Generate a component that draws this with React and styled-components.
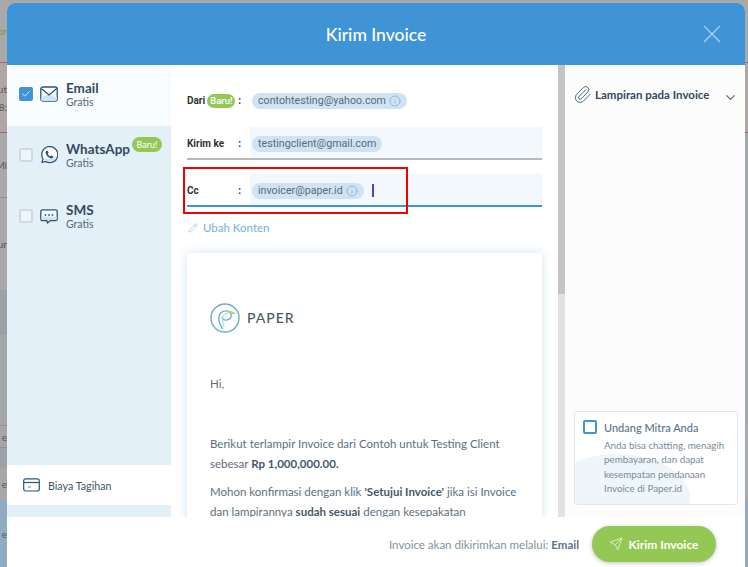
import React from "react";
import styled, { createGlobalStyle } from "styled-components";
import { Check, Paperclip, ChevronDown, X, Info, Pencil, Send } from "lucide-react";

const GlobalStyle = createGlobalStyle`
    html, body {
        margin: 0;
        padding: 0;
        background: #a8a8a8;
        font-family: "Lato", sans-serif;
    }
    * {
        box-sizing: border-box;
    }
`;

const channels = [
    { name: "Email", checked: true, active: true, icon: <MailIcon /> },
    { name: "WhatsApp", isNew: true, icon: <WhatsappIcon /> },
    { name: "SMS", icon: <SmsIcon /> },
];

// what shows of the page behind the modal, top to bottom
const backLeft = [
    { h: 62, tint: "#a9a9a9", text: "or", color: "#7f9a45" },
    { h: 71, tint: "#b0a6a6", text: "ut 8:", line: "#a8606e", lineTop: "#a8606e" },
    { h: 65, tint: "#a9a9a9", text: "Mi", line: "#8f8f8f" },
    { h: 92, tint: "#a8a8a8", text: "ur" },
    { h: 45, tint: "#9aa2a6" },
    { h: 90, tint: "#a5a6a7", text: "", },
    { h: 23, tint: "#a6a6a6", text: "e", line: "#8f8f8f", lineTop: "#8f8f8f" },
    { h: 20, tint: "#9ba3a8" },
    { h: 32, tint: "#a8a8a8", text: "e" },
    { h: 67, tint: "#8facc2", text: "e" },
];

const backRight = [
    { h: 62, tint: "#a9a9a9" },
    { h: 71, tint: "#b0a6a6", line: "#a8606e", lineTop: "#a8606e" },
    { h: 290, tint: "#a3a8ab" },
    { h: 77, tint: "#a8abad" },
    { h: 67, tint: "#8facc2" },
];

function MailIcon() {
    return (
        <svg width="18" height="16" viewBox="0 0 18 16" fill="none">
            <rect x="0.8" y="1" width="16.4" height="14" rx="2" fill="#fff" stroke="#2b5578" strokeWidth="1.3" />
            <path d="M1 11.5 L9 8 L17 11.5 V13 a2 2 0 0 1-2 2 H3 a2 2 0 0 1-2-2 Z" fill="#cfe3f2" />
            <path d="M1.2 2.5 L9 9 L16.8 2.5" stroke="#2b5578" strokeWidth="1.3" />
        </svg>
    );
}

function WhatsappIcon() {
    return (
        <svg width="18" height="18" viewBox="0 0 18 18" fill="none">
            <path d="M2 16.5 L3 12.8 A8 8 0 1 1 5.6 15.4 Z" fill="#fff" stroke="#2b5578" strokeWidth="1.3" strokeLinejoin="round" />
            <path d="M3 12.5 A8 8 0 0 0 16.8 10.5 C12 13 7 13 3 12.5 Z" fill="#cfe3f2" />
            <path d="M6.4 5 L7.8 4.7 L8.6 6.8 L7.7 7.7 C8.2 8.9 9.1 9.8 10.3 10.3 L11.2 9.4 L13.3 10.2 L13 11.6 C12.6 12.4 11.6 12.6 10.6 12.2 C8.2 11.3 6.7 9.8 5.8 7.4 C5.4 6.4 5.6 5.4 6.4 5 Z" fill="#2b5578" />
        </svg>
    );
}

function SmsIcon() {
    return (
        <svg width="18" height="15" viewBox="0 0 18 15" fill="none">
            <path d="M2.5 0.8 H15.5 a1.7 1.7 0 0 1 1.7 1.7 V10 a1.7 1.7 0 0 1-1.7 1.7 H10 L7.5 14 L7 11.7 H2.5 A1.7 1.7 0 0 1 0.8 10 V2.5 A1.7 1.7 0 0 1 2.5 0.8 Z" fill="#fff" stroke="#2b5578" strokeWidth="1.3" strokeLinejoin="round" />
            <path d="M1.4 7.5 H16.6 V10 a1 1 0 0 1-1 1 H2.4 a1 1 0 0 1-1-1 Z" fill="#cfe3f2" />
            <circle cx="5.5" cy="6" r="0.9" fill="#2b5578" />
            <circle cx="9" cy="6" r="0.9" fill="#2b5578" />
            <circle cx="12.5" cy="6" r="0.9" fill="#2b5578" />
        </svg>
    );
}

function BillIcon() {
    return (
        <svg width="17" height="14" viewBox="0 0 17 14" fill="none">
            <rect x="0.7" y="0.8" width="15.6" height="12.2" rx="2" stroke="#2b5578" strokeWidth="1.2" />
            <path d="M1 4.5 H16" stroke="#2b5578" strokeWidth="1.2" />
            <path d="M5 9 H8" stroke="#7f9bb2" strokeWidth="1.2" />
        </svg>
    );
}

function PaperLogo() {
    return (
        <svg width="30" height="30" viewBox="0 0 30 30" fill="none">
            <circle cx="15" cy="15" r="14" fill="#fdfefe" stroke="#6fb0b8" strokeWidth="1.4" />
            <path d="M12.5 25.5 C9.5 21 8 16 9.3 12.3 C10.6 8.6 15 7 18.3 8.3 C21.8 9.7 22.2 14.2 19.2 16.2 C16.8 17.8 13.4 17.4 12.2 15" stroke="#6fb4bd" strokeWidth="1.4" strokeLinecap="round" />
            <path d="M14 23.5 C12.4 19 12 14.5 14 11.8 C15 10.6 16.4 10.2 17.6 10.5" stroke="#a3d2d8" strokeWidth="1" strokeLinecap="round" />
            <path d="M16 8 C19 7.2 23 8.2 26 10.8 C23 11.6 19 10.6 16 8 Z" fill="#a5d27a" />
        </svg>
    );
}

const BackColumn = ({ bands, $width }) => (
    <BackStrip $width={$width}>
        {bands.map((b, i) => (
            <BackBand key={i} $h={b.h} $tint={b.tint} $line={b.line} $lineTop={b.lineTop} $color={b.color}>
                {b.text && b.text.split(" ").map((t) => <span key={t}>{t}</span>)}
            </BackBand>
        ))}
    </BackStrip>
);

const App = () => {
    return (
        <Page>
            <GlobalStyle />
            <BackColumn bands={backLeft} $width={7} />
            <Modal>
                <Header>
                    <Title>Kirim Invoice</Title>
                    <CloseButton><X size={30} strokeWidth={1} /></CloseButton>
                </Header>
                <Body>
                    <Sidebar>
                        <Channels>
                            {channels.map((c) => (
                                <Channel key={c.name} $active={c.active}>
                                    <CheckBox $checked={c.checked}>
                                        {c.checked && <Check size={12} strokeWidth={2} color="#fff" />}
                                    </CheckBox>
                                    <ChannelIcon>{c.icon}</ChannelIcon>
                                    <ChannelText>
                                        <ChannelName>
                                            {c.name}
                                            {c.isNew && <SideBadge>Baru!</SideBadge>}
                                        </ChannelName>
                                        <Free>Gratis</Free>
                                    </ChannelText>
                                </Channel>
                            ))}
                        </Channels>
                        <BillRow>
                            <BillIcon />
                            <span>Biaya Tagihan</span>
                        </BillRow>
                    </Sidebar>
                    <Main>
                        <Field>
                            <Label>
                                <LabelName>Dari <FieldBadge>Baru!</FieldBadge></LabelName>
                                <span>:</span>
                            </Label>
                            <Input $plain>
                                <Chip>contohtesting@yahoo.com <Info size={12} strokeWidth={1.2} color="#5fa3dc" /></Chip>
                            </Input>
                        </Field>
                        <Field $border="#b9b9b9">
                            <Label>
                                <LabelName>Kirim ke</LabelName>
                                <span>:</span>
                            </Label>
                            <Input>
                                <Chip>testingclient@gmail.com</Chip>
                            </Input>
                        </Field>
                        <Field $border="#3f94d8">
                            <Label>
                                <LabelName>Cc</LabelName>
                                <span>:</span>
                            </Label>
                            <Input>
                                <Chip>invoicer@paper.id <Info size={12} strokeWidth={1.2} color="#5fa3dc" /></Chip>
                                <Caret />
                            </Input>
                        </Field>
                        <EditLink><Pencil size={10} strokeWidth={1.2} /> Ubah Konten</EditLink>
                        <Letter>
                            <Logo>
                                <PaperLogo />
                                <LogoName>PAPER</LogoName>
                            </Logo>
                            <Greeting>Hi,</Greeting>
                            <Para>
                                Berikut terlampir Invoice dari Contoh untuk Testing Client sebesar <b>Rp 1,000,000.00.</b>
                            </Para>
                            <Para>
                                Mohon konfirmasi dengan klik <b>'Setujui Invoice'</b> jika isi Invoice dan lampirannya <b>sudah sesuai</b> dengan kesepakatan
                            </Para>
                        </Letter>
                    </Main>
                    <Scrollbar />
                    <Aside>
                        <Attach>
                            <Paperclip size={19} strokeWidth={1.1} color="#2b5578" />
                            <AttachTitle>Lampiran pada Invoice</AttachTitle>
                            <ChevronDown size={15} strokeWidth={2} color="#5c6b78" />
                        </Attach>
                        <Invite>
                            <InviteHead>
                                <InviteBox />
                                <InviteTitle>Undang Mitra Anda</InviteTitle>
                            </InviteHead>
                            <InviteText>
                                Anda bisa chatting, menagih pembayaran, dan dapat kesempatan pendanaan Invoice di Paper.id
                            </InviteText>
                        </Invite>
                    </Aside>
                </Body>
                <Footer>
                    <FooterNote>Invoice akan dikirimkan melalui: <b>Email</b></FooterNote>
                    <SendButton><Send size={14} strokeWidth={1.1} /> Kirim Invoice</SendButton>
                </Footer>
                <Annotation />
            </Modal>
            <BackColumn bands={backRight} $width={3} />
        </Page>
    );
};

const Page = styled.div`
    display: flex;
    width: 748px;
    height: 567px;
    overflow: hidden;
    background: #a8a8a8;
`;

const BackStrip = styled.div`
    flex: none;
    width: ${(p) => p.$width}px;
    display: flex;
    flex-direction: column;
    overflow: hidden;
    font-size: 10px;
    color: #555;
`;

const BackBand = styled.div`
    flex: none;
    height: ${(p) => p.$h}px;
    display: flex;
    flex-direction: column;
    align-items: flex-end;
    justify-content: center;
    gap: 6px;
    color: ${(p) => p.$color || "#555"};
    background: ${(p) => p.$tint};
    border-top: ${(p) => (p.$lineTop ? `1px solid ${p.$lineTop}` : "none")};
    border-bottom: ${(p) => (p.$line ? `1px solid ${p.$line}` : "none")};
    span {
        white-space: nowrap;
        line-height: 12px;
    }
`;

const Modal = styled.div`
    position: relative;
    flex: none;
    width: 738px;
    height: 564px;
    margin-top: 3px;
    display: flex;
    flex-direction: column;
    border-radius: 8px 8px 0 0;
    overflow: hidden;
    background: #fff;
`;

const Annotation = styled.div`
    position: absolute;
    left: 176px;
    top: 164px;
    width: 225px;
    height: 47px;
    border: 2px solid #f00000;
    pointer-events: none;
`;

const Header = styled.header`
    position: relative;
    flex: none;
    height: 62px;
    display: flex;
    align-items: center;
    justify-content: center;
    background: #3f94d6;
`;

const Title = styled.h1`
    margin: 0;
    font-size: 17.5px;
    font-weight: 500;
    color: #fff;
`;

const CloseButton = styled.span`
    position: absolute;
    right: 18px;
    top: 16px;
    display: flex;
    color: #a9d0ef;
`;

const Body = styled.div`
    flex: none;
    height: 452px;
    display: flex;
    overflow: hidden;
`;

const Sidebar = styled.nav`
    flex: none;
    width: 164px;
    display: flex;
    flex-direction: column;
    background: #e3f0f8;
`;

const Channels = styled.div`
    flex: none;
    height: 400px;
`;

const Channel = styled.div`
    height: 61px;
    display: flex;
    align-items: center;
    padding: 0 0 3px 12px;
    background: ${(p) => (p.$active ? "#f8fcff" : "transparent")};
`;

const CheckBox = styled.span`
    flex: none;
    width: 14px;
    height: 14px;
    display: flex;
    align-items: center;
    justify-content: center;
    border-radius: 2px;
    border: 2px solid ${(p) => (p.$checked ? "#3f94d6" : "#cfd9e0")};
    background: ${(p) => (p.$checked ? "#3f94d6" : "#eef5fa")};
`;

const ChannelIcon = styled.span`
    flex: none;
    width: 18px;
    margin: 0 8px 0 7px;
    display: flex;
    justify-content: center;
`;

const ChannelText = styled.div`
    display: flex;
    flex-direction: column;
`;

const ChannelName = styled.div`
    display: flex;
    font-size: 13.5px;
    line-height: 16px;
    font-weight: 700;
    color: #34495e;
`;

const SideBadge = styled.span`
    width: 30px;
    height: 15px;
    margin: -4px 0 0 2px;
    border-radius: 8px;
    text-align: center;
    font-size: 9px;
    line-height: 15px;
    font-weight: 400;
    color: #fff;
    background: #94c854;
`;

const Free = styled.div`
    font-size: 10.5px;
    line-height: 13px;
    color: #56697a;
`;

const BillRow = styled.div`
    flex: none;
    height: 40px;
    display: flex;
    align-items: center;
    gap: 8px;
    padding-left: 16px;
    font-size: 10.7px;
    color: #3d5568;
    background: #fff;
`;

const Main = styled.main`
    flex: none;
    width: 387px;
    padding: 18px 16px 0;
    overflow: hidden;
    background: #fff;
`;

const Field = styled.div`
    display: flex;
    height: 33px;
    margin-bottom: ${(p) => (p.$border ? 14 : 11)}px;
    border-bottom: ${(p) => (p.$border ? `2px solid ${p.$border}` : "none")};
`;

const Label = styled.div`
    flex: none;
    width: 63px;
    padding: 2px 9px 0 0;
    display: flex;
    align-items: center;
    justify-content: space-between;
    font-family: "Roboto", sans-serif;
    font-size: 10px;
    font-weight: 700;
    color: #333;
`;

const LabelName = styled.span`
    display: flex;
    align-items: center;
    gap: 2px;
`;

const FieldBadge = styled.span`
    padding: 0 3px;
    height: 14px;
    border-radius: 7px;
    font-size: 9.5px;
    line-height: 14px;
    font-weight: 500;
    color: #fff;
    background: #94c854;
`;

const Input = styled.div`
    flex: 1;
    display: flex;
    align-items: center;
    padding: 2px 0 0 2px;
    background: ${(p) => (p.$plain ? "transparent" : "#f3f8fc")};
`;

const Chip = styled.span`
    display: inline-flex;
    align-items: center;
    gap: 3px;
    height: 16px;
    padding: 0 6px;
    border-radius: 8px;
    font-family: "Roboto", sans-serif;
    font-size: 10.7px;
    color: #5b6b78;
    background: #cfe3f2;
`;

const Caret = styled.span`
    width: 2px;
    height: 13px;
    margin-left: 8px;
    background: #5b3fb5;
`;

const EditLink = styled.div`
    display: flex;
    align-items: center;
    gap: 5px;
    padding-left: 1px;
    font-size: 11.5px;
    line-height: 14px;
    color: #7aaedc;
`;

const Letter = styled.article`
    height: 300px;
    margin-top: 18px;
    padding: 50px 23px 0;
    box-shadow: 0 0 10px rgba(63, 148, 214, 0.25);
    border-radius: 2px;
    font-size: 11.5px;
    line-height: 20px;
    color: #5d6e7c;
`;

const Logo = styled.div`
    display: flex;
    align-items: center;
    gap: 7px;
`;

const LogoName = styled.span`
    font-size: 14px;
    letter-spacing: 1px;
    font-weight: 500;
    color: #4a5a64;
`;

const Greeting = styled.p`
    margin: 41px 0 0;
`;

const Para = styled.p`
    margin: 40px 0 0;
    & + & {
        margin-top: 8px;
    }
    b {
        font-weight: 700;
        color: #47586a;
    }
`;

const Scrollbar = styled.div`
    flex: none;
    width: 7px;
    background: linear-gradient(#c4c4c4 0 229px, #e2e2e2 229px);
`;

const Aside = styled.aside`
    flex: 1;
    display: flex;
    flex-direction: column;
    justify-content: space-between;
    padding: 16px 7px 12px 9px;
    background: #fcfcfc;
`;

const Attach = styled.div`
    display: flex;
    align-items: center;
    gap: 3px;
    padding-top: 3px;
    margin-left: -1px;
    svg:last-child {
        margin-top: 6px;
    }
`;

const AttachTitle = styled.span`
    flex: 1;
    font-size: 11.5px;
    font-weight: 700;
    color: #34495e;
`;

const Invite = styled.div`
    position: relative;
    height: 94px;
    padding: 8px 8px;
    border: 1px solid #dfe7ee;
    border-radius: 3px;
    overflow: hidden;
    background: #fff;
    &::before {
        content: "";
        position: absolute;
        left: -30px;
        bottom: -40px;
        width: 145px;
        height: 90px;
        border-radius: 50%;
        background: #eef5fb;
    }
`;

const InviteHead = styled.div`
    position: relative;
    display: flex;
    align-items: center;
    gap: 7px;
`;

const InviteBox = styled.span`
    width: 14px;
    height: 14px;
    border: 2px solid #3f94d6;
    border-radius: 2px;
`;

const InviteTitle = styled.span`
    font-size: 11px;
    font-weight: 500;
    color: #5b7488;
`;

const InviteText = styled.p`
    position: relative;
    margin: 4px 0 0 21px;
    font-size: 9.8px;
    line-height: 14.4px;
    color: #7a8a98;
`;

const Footer = styled.footer`
    flex: 1;
    display: flex;
    align-items: center;
    justify-content: flex-end;
    gap: 13px;
    padding: 9px 29px 5px 0;
    background: #fff;
`;

const FooterNote = styled.span`
    font-size: 11.5px;
    color: #82929e;
    b {
        color: #5b7488;
    }
`;

const SendButton = styled.span`
    display: flex;
    align-items: center;
    justify-content: center;
    gap: 5px;
    width: 124px;
    height: 36px;
    border-radius: 18px;
    font-size: 12px;
    font-weight: 700;
    color: #fff;
    background: #94c854;
    box-shadow: 0 1px 4px rgba(0, 0, 0, 0.25);
`;

export default App;
